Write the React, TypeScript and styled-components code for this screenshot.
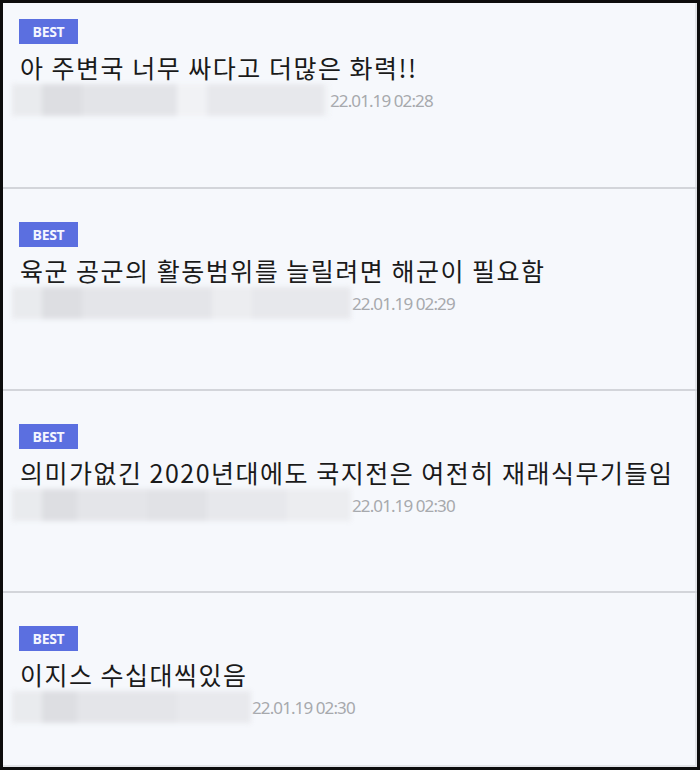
import React from "react";
import styled, { createGlobalStyle } from "styled-components";

const GlobalStyle = createGlobalStyle`
  html, body {
    margin: 0;
    padding: 0;
    background: #0d0d0d;
  }
  * {
    box-sizing: border-box;
  }
`;

const Frame = styled.div`
  width: 700px;
  height: 770px;
  border: 3px solid #0d0d0d;
  background-color: #f6f8fc;
  box-shadow: inset -2px -2px 0 #e2e4e8;
  overflow: hidden;
  font-family: "Noto Sans CJK KR", "Noto Sans", sans-serif;
`;

const Item = styled.div<{ $first?: boolean }>`
  height: ${(p) => (p.$first ? "186px" : "202px")};
  padding: ${(p) => (p.$first ? "16px" : "33px")} 0 0 16px;
  border-bottom: 2px solid #d3d5da;
  display: flex;
  flex-direction: column;
  align-items: flex-start;

  &:last-child {
    border-bottom: none;
  }
`;

const Badge = styled.span`
  display: inline-flex;
  align-items: center;
  justify-content: center;
  width: 59px;
  height: 25px;
  background-color: #5b6fe0;
  color: #f4f6ff;
  font-family: "Open Sans", "Noto Sans", sans-serif;
  font-weight: 700;
  font-size: 14px;
  letter-spacing: -0.3px;
`;

const Content = styled.div`
  margin-top: 6px;
  margin-left: 1px;
  font-size: 25px;
  line-height: 34px;
  color: #1a1a1a;
  letter-spacing: 1.5px;
  white-space: nowrap;
`;

const Meta = styled.div`
  display: flex;
  align-items: center;
  height: 32px;
  margin-left: -7px;
`;

const Mosaic = styled.div<{ $width: number }>`
  display: flex;
  width: ${(p) => p.$width}px;
  height: 32px;
  filter: blur(2.5px);
`;

const Tile = styled.div<{ $w: number; $shade: string }>`
  width: ${(p) => p.$w}px;
  height: 100%;
  background-color: ${(p) => p.$shade};
`;

const DateText = styled.span`
  margin-left: 1px;
  font-family: "Noto Sans", "Liberation Sans", sans-serif;
  font-size: 17px;
  letter-spacing: -0.9px;
  color: #a7a9ad;
`;

type Comment = {
  text: string;
  date: string;
  tiles: [number, string][];
};

const comments: Comment[] = [
  {
    text: "아 주변국 너무 싸다고 더많은 화력!!",
    date: "22.01.19 02:28",
    tiles: [
      [30, "#e9ebee"],
      [40, "#dddee2"],
      [95, "#e3e4e8"],
      [30, "#f1f2f5"],
      [117, "#e7e8ec"],
      [5, "#f1f3f6"],
    ],
  },
  {
    text: "육군 공군의 활동범위를 늘릴려면 해군이 필요함",
    date: "22.01.19 02:29",
    tiles: [
      [30, "#e9ebee"],
      [40, "#dddee2"],
      [130, "#e4e5e9"],
      [40, "#ecedf0"],
      [99, "#e7e8ec"],
    ],
  },
  {
    text: "의미가없긴 2020년대에도 국지전은 여전히 재래식무기들임",
    date: "22.01.19 02:30",
    tiles: [
      [30, "#e9ebee"],
      [35, "#dddee2"],
      [70, "#e4e5e9"],
      [60, "#e1e2e6"],
      [80, "#e7e8ec"],
      [64, "#ecedf0"],
    ],
  },
  {
    text: "이지스 수십대씩있음",
    date: "22.01.19 02:30",
    tiles: [
      [30, "#e9ebee"],
      [35, "#dddee2"],
      [100, "#e4e5e9"],
      [74, "#e8e9ed"],
    ],
  },
];

export default function App() {
  return (
    <>
      <GlobalStyle />
      <Frame>
        {comments.map((c, i) => {
          const width = c.tiles.reduce((sum, t) => sum + t[0], 0);
          return (
            <Item key={i} $first={i === 0}>
              <Badge>BEST</Badge>
              <Content>{c.text}</Content>
              <Meta>
                <Mosaic $width={width}>
                  {c.tiles.map(([w, shade], j) => (
                    <Tile key={j} $w={w} $shade={shade} />
                  ))}
                </Mosaic>
                <DateText>{c.date}</DateText>
              </Meta>
            </Item>
          );
        })}
      </Frame>
    </>
  );
}
